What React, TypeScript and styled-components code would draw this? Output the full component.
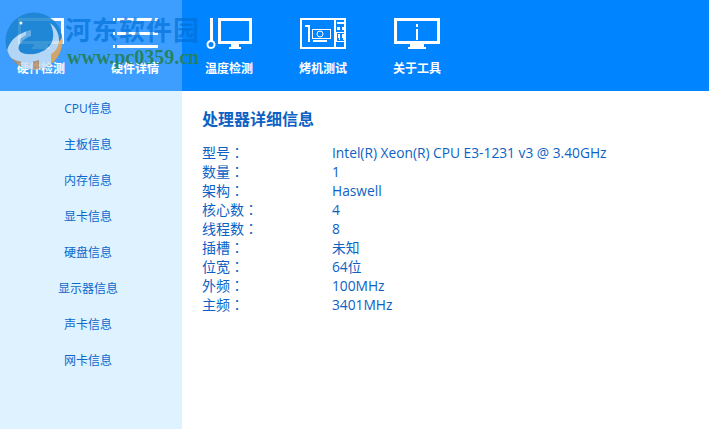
import styled, { createGlobalStyle } from "styled-components";

const GlobalStyle = createGlobalStyle`
  html, body {
    margin: 0;
    padding: 0;
    background: #ffffff;
  }
  body {
    font-family: "Open Sans", "Noto Sans CJK SC", sans-serif;
  }
`;

const Window = styled.div`
  position: relative;
  width: 709px;
  height: 429px;
  overflow: hidden;
  display: flex;
  flex-flow: column;
`;

const Header = styled.div`
  height: 91px;
  display: flex;
  background: #0084ff;
`;

const ActiveGroup = styled.div`
  width: 182px;
  display: flex;
  gap: 12px;
  background: #3d9eff;
`;

const ToolGroup = styled.div`
  display: flex;
  gap: 12px;
  padding-left: 6px;
`;

const Tab = styled.div`
  width: 82px;
  display: flex;
  flex-flow: column;
  align-items: center;
  padding-top: 17px;
  color: #ffffff;

  svg {
    display: block;
    height: 33px;
    width: 50px;
    shape-rendering: crispEdges;
  }

  span {
    margin-top: 11px;
    font-size: 12px;
    font-weight: 700;
    line-height: 16px;
  }
`;

const Body = styled.div`
  flex: 1;
  display: flex;
`;

const Sidebar = styled.div`
  width: 182px;
  box-sizing: border-box;
  padding-right: 6px;
  background: #dff2ff;
  display: flex;
  flex-flow: column;
`;

const SideItem = styled.div`
  height: 36px;
  line-height: 36px;
  text-align: center;
  font-size: 12px;
  color: #0c68cc;
`;

const Content = styled.div`
  flex: 1;
  padding: 17px 20px;
  color: #0c62c4;
`;

const Title = styled.div`
  font-size: 16px;
  font-weight: 700;
  line-height: 22px;
  margin-bottom: 13px;
`;

const InfoRow = styled.div`
  display: flex;
  height: 19px;
  line-height: 19px;
  font-size: 13.75px;
`;

const InfoKey = styled.div`
  width: 130px;
  font-size: 14px;
`;

const Colon = styled.span`
  font-family: "Noto Sans CJK TC", sans-serif;
`;

const Logo = styled.svg`
  position: absolute;
  left: 5px;
  top: 12px;
  width: 58px;
  height: 58px;
  opacity: 0.85;
`;

const WatermarkName = styled.div`
  position: absolute;
  left: 65px;
  top: 12px;
  font-family: "Noto Sans CJK SC", sans-serif;
  font-size: 26px;
  font-weight: 700;
  letter-spacing: 1px;
  line-height: 34px;
  white-space: nowrap;
  color: rgba(0, 112, 215, 0.7);
`;

const WatermarkUrl = styled.div`
  position: absolute;
  left: 67px;
  top: 46px;
  font-family: "Liberation Serif", serif;
  font-size: 20px;
  font-weight: 700;
  line-height: 22px;
  white-space: nowrap;
  color: rgba(36, 130, 90, 0.95);
`;

const MonitorFrame = () => (
  <>
    <rect x="3.5" y="2.5" width="43" height="23" strokeWidth="3" />
    <path d="M18 28.5h14" strokeWidth="3" />
    <path d="M16 31h18" strokeWidth="2" />
  </>
);

const chipIcon = (
  <svg viewBox="0 0 50 33" fill="none" stroke="#fff">
    <MonitorFrame />
  </svg>
);

const listIcon = (
  <svg viewBox="0 0 50 33" fill="none" stroke="#fff" strokeWidth="3">
    <path d="M3 2.5h2M7 2.5h41M3 16.5h2M7 16.5h41M3 29.5h2M7 29.5h41" />
  </svg>
);

const tempIcon = (
  <svg viewBox="0 0 50 33" fill="none" stroke="#fff">
    <path d="M7 1v24" strokeWidth="3" />
    <circle cx="7" cy="27.5" r="3.5" strokeWidth="2" shapeRendering="auto" />
    <rect x="15.5" y="2.5" width="31" height="23" strokeWidth="3" />
    <path d="M27 28.5h8" strokeWidth="3" />
    <path d="M25 31h12" strokeWidth="2" />
  </svg>
);

const burnIcon = (
  <svg viewBox="0 0 50 33" fill="none" stroke="#fff">
    <rect x="3" y="2" width="44" height="29" strokeWidth="2" />
    <path d="M37 2v29" strokeWidth="2" />
    <path d="M7 9h4v16" strokeWidth="2" />
    <rect x="14.5" y="12.5" width="18" height="9" strokeWidth="1.5" />
    <circle cx="22" cy="17" r="3" strokeWidth="1" shapeRendering="auto" />
    <path d="M15 24h14" strokeWidth="1.5" />
    <path d="M39 6h7" strokeWidth="2.5" />
    <path d="M39 11h3M44 11h2" strokeWidth="3" />
    <rect x="38.5" y="15.5" width="8" height="9" strokeWidth="1" />
    <path d="M41 17.5v3h-1v-3zM41 17.5v5M45 17.5v3h-1v-3zM45 17.5v5" strokeWidth="1" />
  </svg>
);

const aboutIcon = (
  <svg viewBox="0 0 50 33" fill="none" stroke="#fff">
    <MonitorFrame />
    <path d="M25 12v11M25 7v3" strokeWidth="2" />
  </svg>
);

const sideItems = ["CPU信息", "主板信息", "内存信息", "显卡信息", "硬盘信息", "显示器信息", "声卡信息", "网卡信息"];

const infoRows = [
  ["型号", "Intel(R) Xeon(R) CPU E3-1231 v3 @ 3.40GHz"],
  ["数量", "1"],
  ["架构", "Haswell"],
  ["核心数", "4"],
  ["线程数", "8"],
  ["插槽", "未知"],
  ["位宽", "64位"],
  ["外频", "100MHz"],
  ["主频", "3401MHz"],
];

export default function App() {
  return (
    <Window>
      <GlobalStyle />
      <Header>
        <ActiveGroup>
          <Tab>
            {chipIcon}
            <span>硬件检测</span>
          </Tab>
          <Tab>
            {listIcon}
            <span>硬件详情</span>
          </Tab>
        </ActiveGroup>
        <ToolGroup>
          <Tab>
            {tempIcon}
            <span>温度检测</span>
          </Tab>
          <Tab>
            {burnIcon}
            <span>烤机测试</span>
          </Tab>
          <Tab>
            {aboutIcon}
            <span>关于工具</span>
          </Tab>
        </ToolGroup>
      </Header>
      <Body>
        <Sidebar>
          {sideItems.map((item) => (
            <SideItem key={item}>{item}</SideItem>
          ))}
        </Sidebar>
        <Content>
          <Title>处理器详细信息</Title>
          {infoRows.map(([key, value]) => (
            <InfoRow key={key}>
              <InfoKey>
                {key}
                <Colon>：</Colon>
              </InfoKey>
              <div>{value}</div>
            </InfoRow>
          ))}
        </Content>
      </Body>
      <Logo viewBox="0 0 58 58">
        <defs>
          <clipPath id="logo-disc">
            <circle cx="29" cy="29" r="28.5" />
          </clipPath>
        </defs>
        <g clipPath="url(#logo-disc)">
          <rect width="58" height="58" fill="#1a84d0" />
          <path d="M0 42h58v16H0z" fill="#b98e62" />
          <path d="M58 24v30H36z" fill="#eda850" />
          <path
            d="M2 42C2 28 16 20 26 18v6c-9 3-14 10-12 14 4 7 24 6 32-6 4-7 2-16-1-21 7 5 12 15 7 25C44 50 12 56 2 42Z"
            fill="#c8e0f6"
          />
          <path d="M16 44h12v14H16zM34 42h12v16H34z" fill="#c8e0f6" />
          <path d="M15 27l6-4v-6h5v23H15z" fill="#1a7fcc" opacity="0.5" />
        </g>
        <circle cx="16" cy="11" r="1.5" fill="#ffffff" />
      </Logo>
      <WatermarkName>河东软件园</WatermarkName>
      <WatermarkUrl>www.pc0359.cn</WatermarkUrl>
    </Window>
  );
}
